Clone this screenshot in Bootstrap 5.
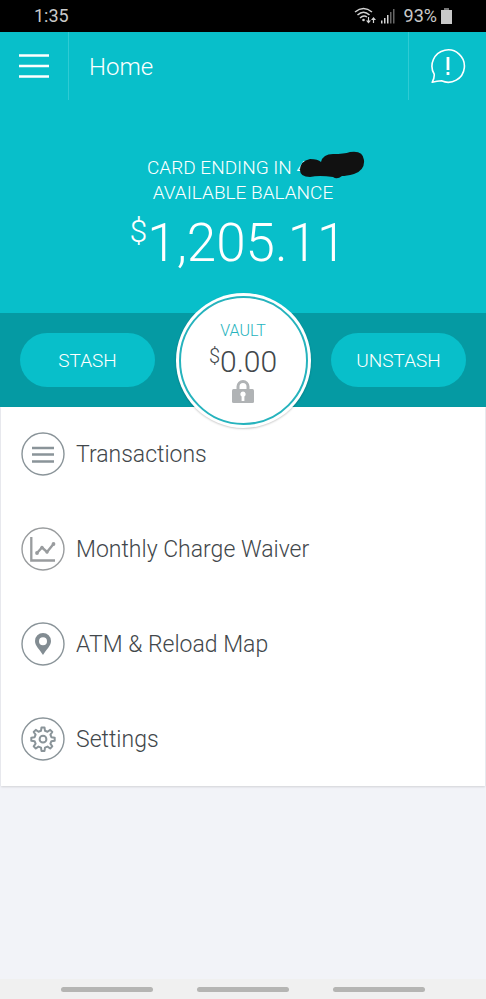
<!DOCTYPE html>
<html lang="en">
<head>
<meta charset="utf-8">
<meta name="viewport" content="width=device-width, initial-scale=1">
<title>Home</title>
<link href="https://cdn.jsdelivr.net/npm/bootstrap@5.3.0/dist/css/bootstrap.min.css" rel="stylesheet">
<style>
  body { font-family: Roboto, "Liberation Sans", sans-serif; font-weight: 300; background: #f2f3f8; color: #42474b; }
  svg { display: block; flex: none; }
  .status-bar { height: 32px; background: #000; color: #c9c9c9; font-size: 18px; font-weight: 400; line-height: 32px; padding: 0 34px; }
  .app-bar { height: 68px; background: #08bfca; color: #fff; }
  .app-bar button { border: 0; background: none; color: #fff; padding: 0; }
  .menu-btn { width: 69px; border-right: 1px solid #2fcbd4 !important; }
  .help-btn { width: 78px; border-left: 1px solid #2fcbd4 !important; }
  .app-title { font-size: 24px; line-height: 30px; font-weight: 300; padding: 2px 0 0 20px; }
  .balance { height: 213px; background: #08bfca; color: #fff; padding-top: 55px; }
  .caption { font-size: 19px; line-height: 25px; }
  .card-line { padding-right: 32px; }
  .scribble { position: absolute; right: -27px; top: -4px; }
  .amount { font-size: 53px; line-height: 64px; margin-top: 6px; padding-right: 10px; }
  .amount-sign { font-size: 32px; line-height: 40px; }
  .vault-band { height: 94px; background: #059aa3; padding: 0 20px; }
  .pill { width: 135px; height: 54px; background: #08bfca; color: #fff; border: 0; border-radius: 27px; font-size: 19px; font-weight: 300; padding-top: 3px; }
  .vault { width: 135px; height: 135px; margin: -20px 0; padding: 3px; background: #fff; border-radius: 50%; box-shadow: 0 1px 2px #0003; position: relative; z-index: 1; }
  .vault-ring { border: 2px solid #26b3bd; border-radius: 50%; padding-top: 22px; }
  .vault-name { color: #26b3bd; font-size: 16px; line-height: 22px; }
  .vault-value { font-size: 30px; line-height: 36px; margin-top: 2px; }
  .vault-sign { font-size: 20px; line-height: 24px; }
  .menu-card { background: #fff; gap: 1px; margin: 0 1px; box-shadow: 0 1px 2px #0002; }
  .menu-row { height: 94px; padding-left: 20px; gap: 11px; font-size: 23px; line-height: 30px; color: #42474b; text-decoration: none; }
  .menu-row span { padding-top: 2px; }
  .nav-strip { height: 20px; background: #f0f0f0; gap: 44px; }
  .nav-strip button { width: 92px; height: 5px; border: 0; border-radius: 3px; padding: 0; background: #b5b5b3; }
</style>
<script src="https://cdn.jsdelivr.net/npm/bootstrap@5.3.0/dist/js/bootstrap.bundle.min.js"></script>
</head>
<body class="min-vh-100 d-flex flex-column">
<div class="status-bar d-flex align-items-center">
  <span class="me-auto">1:35</span>
  <svg width="22" height="18" viewBox="0 0 22 18" fill="none" stroke="#d4d4d4" stroke-width="1.500" aria-hidden="true">
    <path d="M1 5Q9.500-2 18 5M3.500 8Q9.500 2.500 15.500 8M6 11Q9.500 7.500 13 10"/><circle cx="9.500" cy="13" r="1.300" fill="#d4d4d4" stroke="none"/>
    <path d="M14.500 10v5M19.500 16v-4" stroke-width="1.200"/><path d="M12 13.500h5L14.500 16.500zM17 13h5L19.500 10z" fill="#d4d4d4" stroke="none"/>
  </svg>
  <svg class="ms-1" width="16" height="16" viewBox="0 0 16 16" fill="#d4d4d4" aria-hidden="true">
    <path d="M1 12.500h1.500v3H1zM4 10h1.500v5.500H4zM7 7h1.500v8.500H7z"/><path d="M10 4h1.500v11.500H10zM13 1h1.500v14.500H13z" fill="#666"/>
  </svg>
  <span class="ms-2">93%</span>
  <svg class="ms-1" width="11" height="16" viewBox="0 0 11 16" fill="#c9c9c9" aria-hidden="true"><path d="M3 0h5v2H3z" fill="#777"/><path d="M0 2h11v14H0z"/></svg>
</div>

<header class="app-bar d-flex align-items-stretch">
  <button type="button" class="menu-btn d-flex align-items-center justify-content-center" aria-label="Menu">
    <svg width="30" height="26" viewBox="0 0 30 26" stroke="#fff" stroke-width="2.600"><path d="M0 2.500h30M0 13h30M0 23.500h30"/></svg>
  </button>
  <h1 class="app-title m-0 me-auto align-self-center">Home</h1>
  <button type="button" class="help-btn d-flex align-items-center justify-content-center" aria-label="Help">
    <svg width="36" height="36" viewBox="0 0 36 36" fill="none" stroke="#fff" stroke-width="1.600">
      <path d="M4.200 26.200A16.200 16.200 0 1 1 11.500 32.800Q7 33.200 2.200 34.300Q4.600 30 4.200 26.200Z" stroke-linejoin="round"/>
      <path d="M18 9v13M18 24v3" stroke-width="2.800"/>
    </svg>
  </button>
</header>

<main>
  <section class="balance text-center">
    <div class="caption"><span class="card-line position-relative d-inline-block">CARD ENDING IN 4
      <svg class="scribble" width="67" height="29" viewBox="0 0 67 29" aria-hidden="true"><path d="M1 19Q1 10 11 8Q19 8 22 11Q24 3 34 3Q45 3 51 1Q64-1 65 9Q66 19 55 23Q47 25 43 25Q38 29 34 26Q20 24 11 26Q1 26 1 19Z" fill="#111"/></svg></span></div>
    <div class="caption">AVAILABLE BALANCE</div>
    <div class="amount d-flex justify-content-center"><span class="amount-sign">$</span>1,205.11</div>
  </section>

  <section class="vault-band d-flex align-items-center justify-content-between">
    <button type="button" class="pill">STASH</button>
    <div class="vault">
      <div class="vault-ring h-100 d-flex flex-column align-items-center">
        <div class="vault-name">VAULT</div>
        <div class="vault-value d-flex"><span class="vault-sign">$</span>0.00</div>
        <svg width="22" height="23" viewBox="0 0 22 23" aria-hidden="true"><path d="M6 10V6.500a5 5 0 0 1 10 0V10" fill="none" stroke="#b0b3b5" stroke-width="3"/><rect y="9" width="22" height="14" rx="1.500" fill="#b0b3b5"/><path d="M11 11.500a2.700 2.700 0 0 1 1.400 5V21H9.600v-4.500A2.700 2.700 0 0 1 11 11.500Z" fill="#fff"/></svg>
      </div>
    </div>
    <button type="button" class="pill">UNSTASH</button>
  </section>

  <nav class="menu-card d-flex flex-column">
    <a href="#" class="menu-row d-flex align-items-center">
      <svg width="44" height="44" viewBox="0 0 44 44" fill="none" stroke="#8a9499" aria-hidden="true"><circle cx="22" cy="22" r="21" stroke-width="1.400"/><path d="M11 16h22M11 22.500h22M11 29.500h22" stroke-width="2.400"/></svg>
      <span>Transactions</span></a>
    <a href="#" class="menu-row d-flex align-items-center">
      <svg width="44" height="44" viewBox="0 0 44 44" fill="none" stroke="#999c9e" aria-hidden="true"><circle cx="22" cy="22" r="21" stroke-width="1.400"/><path d="M10.300 10v23.500H34" stroke-width="2.300"/><path d="M16 26L21 20.500L26 25L32.500 17" stroke-width="2.400"/><g fill="#999c9e" stroke="none"><circle cx="16" cy="26" r="1.900"/><circle cx="21" cy="20.500" r="1.700"/><circle cx="26" cy="25" r="1.700"/><circle cx="32.500" cy="17" r="1.900"/></g></svg>
      <span>Monthly Charge Waiver</span></a>
    <a href="#" class="menu-row d-flex align-items-center">
      <svg width="44" height="44" viewBox="0 0 44 44" fill="none" stroke="#8a9499" aria-hidden="true"><circle cx="22" cy="22" r="21" stroke-width="1.400"/><path d="M22 11a8 8 0 0 0-8 8c0 5 4.500 8 8 14 3.500-6 8-9 8-14a8 8 0 0 0-8-8Zm0 4.200a4 4 0 1 1 0 8 4 4 0 0 1 0-8Z" fill="#828c92" stroke="none"/></svg>
      <span>ATM &amp; Reload Map</span></a>
    <a href="#" class="menu-row d-flex align-items-center">
      <svg width="44" height="44" viewBox="0 0 44 44" fill="none" stroke="#8a9499" aria-hidden="true"><circle cx="22" cy="22" r="21" stroke-width="1.400"/><g transform="translate(0 -1)"><path stroke-width="2" stroke-linejoin="round" d="M20.500 11.500h3l.5 3.300 2.500 1 2.700-1.900 2.100 2.100-1.900 2.700 1 2.500 3.300.5v3l-3.300.5-1 2.500 1.900 2.700-2.100 2.100-2.700-1.900-2.500 1-.5 3.300h-3l-.5-3.300-2.500-1-2.700 1.900-2.100-2.100 1.900-2.700-1-2.500-3.300-.5v-3l3.300-.5 1-2.500-1.900-2.700 2.100-2.100 2.700 1.900 2.500-1Z"/><circle cx="22" cy="23.200" r="3.400" stroke-width="2"/></g></svg>
      <span>Settings</span></a>
  </nav>
</main>

<div class="nav-strip mt-auto d-flex align-items-center justify-content-center">
  <button type="button" aria-label="Recent apps"></button>
  <button type="button" aria-label="Home screen"></button>
  <button type="button" aria-label="Back"></button>
</div>
</body>
</html>
